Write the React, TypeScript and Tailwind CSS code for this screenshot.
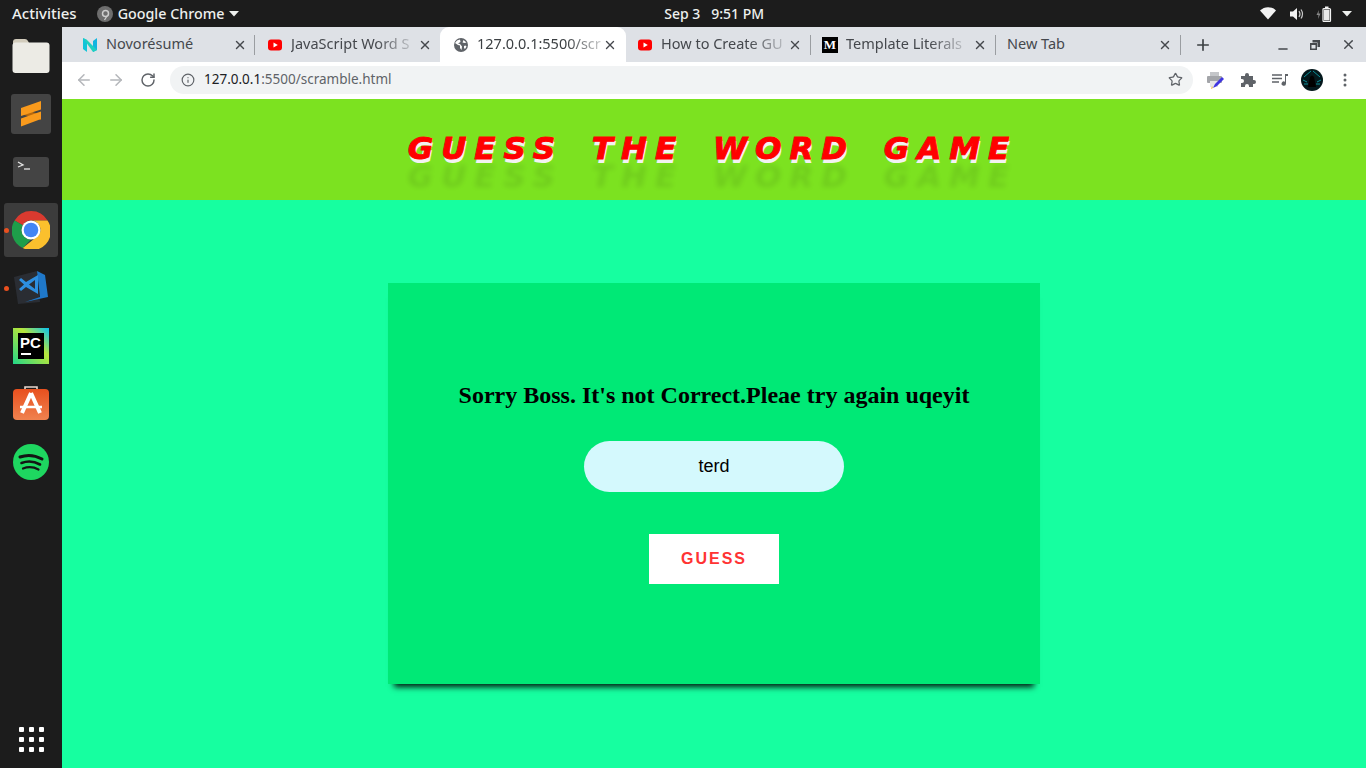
import React from 'react'
import { ArrowLeft, ArrowRight, RotateCw, Info, Star, Plus, X, Minus } from 'lucide-react'

function Youtube() {
  return (
    <svg width="16" height="16" viewBox="0 0 16 16" className="shrink-0">
      <rect x="1" y="2.5" width="14" height="11" rx="3" fill="#f00" />
      <path d="M6.5 5.5 L10.8 8 L6.5 10.5 Z" fill="#fff" />
    </svg>
  )
}

function Novo() {
  return (
    <svg width="16" height="16" viewBox="0 0 16 16" className="shrink-0">
      <path d="M1 1 L5 3 V15 L1 12 Z" fill="#12c4d8" />
      <path d="M15 1 L11 4 V15 L15 13 Z" fill="#12b5e0" />
      <path d="M1 1 L5 3 L15 13 L11 15 Z" fill="#1fd0c0" />
    </svg>
  )
}

function GlobeFav() {
  return (
    <svg width="16" height="16" viewBox="0 0 16 16" className="shrink-0">
      <circle cx="8" cy="8" r="7" fill="#5f6368" />
      <path d="M7 2.5 L4 3.5 L2 6 L5 8 L7 8.5 L7 11 L8.5 13 L9 9.5 L7 7 L5 6.5 L7.5 5 Z" fill="#fff" />
      <path d="M10.5 3 L9.5 5.5 L11.5 6 L13.5 5.5 Z M11 9 L12.5 8.5 L13.5 9.5 L12 12 L11 11 Z" fill="#fff" />
    </svg>
  )
}

function MediumFav() {
  return (
    <div className="w-4 h-4 shrink-0 bg-black text-white flex items-center justify-center font-['Liberation_Serif',serif] font-bold text-[13px] leading-none">
      M
    </div>
  )
}

function Tab({
  icon,
  title,
  active,
  divider,
  after,
  fade,
}: {
  icon?: React.ReactNode
  title: string
  active?: boolean
  divider?: boolean
  after?: boolean
  fade?: boolean
}) {
  return (
    <div
      className={
        active
          ? 'relative w-[186px] h-[35px] shrink-0 flex items-center pl-[13px] pr-[9px] bg-white rounded-t-[9px] text-[#3c4043]'
          : after
            ? 'relative w-[185px] h-[35px] shrink-0 flex items-center pl-[11px] pr-[9px] text-[#45484d]'
            : 'relative w-[185px] h-[35px] shrink-0 flex items-center pl-[12px] pr-[8px] text-[#45484d]'
      }
    >
      {icon}
      <div className={icon ? 'flex-1 ml-[8px] pb-[3px]' : 'flex-1 pb-[3px]'}>
        <span
          className={
            fade
              ? 'inline-block whitespace-nowrap text-[14.5px] [mask-image:linear-gradient(to_right,#000_72%,rgba(0,0,0,0.25)_100%)]'
              : 'inline-block whitespace-nowrap text-[14.5px]'
          }
        >
          {title}
        </span>
      </div>
      <X size={14} strokeWidth={2.4} className="shrink-0 text-[#45484d]" />
      {divider && <div className="absolute right-0 top-[8px] w-px h-[20px] bg-[#9a9da1]" />}
    </div>
  )
}

function TopBar() {
  return (
    <div className="h-[27px] shrink-0 bg-[#1c1c1c] text-[#eef0ee] flex items-center text-[14px] font-medium pl-[12px] pr-[14px]">
      <span className="text-[15px]">Activities</span>
      <svg width="16" height="16" viewBox="0 0 16 16" className="ml-[20px]">
        <circle cx="8" cy="8" r="8" fill="#6e6e6e" />
        <circle cx="8.5" cy="7.5" r="3" fill="none" stroke="#cfcfcf" strokeWidth="1.5" />
        <path d="M10 10 L7.5 14" stroke="#cfcfcf" strokeWidth="1.3" />
      </svg>
      <span className="ml-[5px] text-[14.3px]">Google Chrome</span>
      <svg width="10" height="6" viewBox="0 0 10 6" className="ml-[5px]">
        <path d="M0 0 H10 L5 5.5 Z" fill="#eef0ee" />
      </svg>
      <div className="flex-1 flex justify-center pr-[71px]">
        <span className="whitespace-pre">Sep 3   9:51 PM</span>
      </div>
      <svg width="16" height="13" viewBox="0 0 16 13" className="mr-[1px]">
        <path d="M0 3.5 C4.5 -1 11.5 -1 16 3.5 L8 12.5 Z" fill="#f2f2f2" />
      </svg>
      <svg width="16" height="14" viewBox="0 0 16 14" className="ml-[12px]">
        <path d="M1 4.5 H4 L8 1 V13 L4 9.5 H1 Z" fill="#f2f2f2" />
        <path d="M10 4 Q12 7 10 10 M12 2.5 Q15 7 12 11.5" fill="none" stroke="#c8c8c8" strokeWidth="1.2" />
      </svg>
      <svg width="16" height="16" viewBox="0 0 16 16" className="ml-[11px]">
        <path d="M3 4 L0.5 9 H2.5 L2 13 L4.5 7.5 H2.5 Z" fill="#8a8a8a" />
        <rect x="7" y="2.5" width="7.5" height="13" rx="1" fill="none" stroke="#f2f2f2" strokeWidth="1.2" />
        <rect x="9" y="0.5" width="3.5" height="2" fill="#f2f2f2" />
        <rect x="8" y="3.5" width="5.5" height="11" fill="#e8e8e8" />
      </svg>
      <svg width="10" height="6" viewBox="0 0 10 6" className="ml-[10px]">
        <path d="M0 0 H10 L5 5.5 Z" fill="#eef0ee" />
      </svg>
    </div>
  )
}

function DockItem({ children, active, dot }: { children: React.ReactNode; active?: boolean; dot?: boolean }) {
  return (
    <div className="relative h-[58px] w-[62px] flex items-center justify-center">
      {active && <div className="absolute left-[4px] top-[2px] w-[54px] h-[54px] rounded-[3px] bg-[#3c3c3c]" />}
      {dot && <div className="absolute left-[4px] top-[27px] w-[5px] h-[5px] rounded-full bg-[#e9501f]" />}
      <div className="relative">{children}</div>
    </div>
  )
}

function Dock() {
  return (
    <div className="w-[62px] shrink-0 bg-[#1c1c1c] flex flex-col items-center">
      <DockItem>
        <svg width="38" height="36" viewBox="0 0 38 36">
          <path d="M1 4 Q1 1 4 1 H13 Q15 1 16 3 L17 5 H34 Q37 5 37 8 V12 H1 Z" fill="#d2ccbc" />
          <rect x="0.5" y="4.5" width="37" height="30.5" rx="3" fill="#ecebe5" />
        </svg>
      </DockItem>
      <DockItem>
        <svg width="40" height="40" viewBox="0 0 40 40">
          <rect width="40" height="40" rx="3" fill="#444444" />
          <path d="M10 14 L30 21 V26 L10 20 Z" fill="#b9690c" />
          <path d="M30 7 V15.5 L10 22 V14 Z" fill="#f99a1c" />
          <path d="M30 17.5 V25 L10 32.5 V24.5 Z" fill="#f99a1c" />
        </svg>
      </DockItem>
      <DockItem>
        <svg width="36" height="30" viewBox="0 0 36 30">
          <rect width="36" height="30" rx="3" fill="#444444" />
          <path d="M5 5 L10 8 L5 10" fill="none" stroke="#e6e6e6" strokeWidth="1.3" />
          <path d="M11 12 H17" stroke="#e6e6e6" strokeWidth="1.3" />
        </svg>
      </DockItem>
      <DockItem active dot>
        <svg width="38" height="38" viewBox="0 0 38 38">
          <path d="M19 0 A19 19 0 0 1 35.5 9.5 L19 9.5 A9.5 9.5 0 0 0 10.8 14.3 L2.6 9.5 A19 19 0 0 1 19 0 Z" fill="#d93a2f" />
          <path d="M2.6 9.5 L10.8 14.3 A9.5 9.5 0 0 0 19 28.5 L10.8 37 A19 19 0 0 1 2.6 9.5 Z" fill="#1e9e4a" />
          <path d="M35.5 9.5 A19 19 0 0 1 10.8 37 L27.2 23.7 A9.5 9.5 0 0 0 19 9.5 Z" fill="#fbc02d" />
          <circle cx="19" cy="19" r="9.5" fill="#fff" />
          <circle cx="19" cy="19" r="7.3" fill="#4285f4" />
        </svg>
      </DockItem>
      <DockItem dot>
        <svg width="36" height="36" viewBox="0 0 36 36">
          <path d="M1 7 L24 1 L27 32 L5 34 Z" fill="#2a2d33" />
          <path d="M24 1 L32 5 L35 27 L12 32 L27 27 Z" fill="#1f78c9" />
          <path d="M25 5 V24 L13 17 L8 21 L6 19 L11 14.5 L6 10 L8 8 L13 12 Z" fill="#2d8fe0" />
          <path d="M22 10 L16 14.5 L22 19 Z" fill="#2a2d33" />
        </svg>
      </DockItem>
      <DockItem>
        <svg width="36" height="36" viewBox="0 0 36 36">
          <defs>
            <linearGradient id="pc" x1="0" y1="1" x2="1" y2="0">
              <stop offset="0" stopColor="#21d789" />
              <stop offset="0.6" stopColor="#b8e53a" />
              <stop offset="1" stopColor="#07c3f2" />
            </linearGradient>
          </defs>
          <rect width="36" height="36" fill="url(#pc)" />
          <rect x="5" y="5" width="26" height="26" fill="#000" />
          <text x="7" y="20" fontFamily="Liberation Sans, sans-serif" fontWeight="700" fontSize="15" fill="#fff">
            PC
          </text>
          <rect x="8" y="25" width="10" height="2" fill="#fff" />
        </svg>
      </DockItem>
      <DockItem>
        <svg width="36" height="36" viewBox="0 0 36 36">
          <defs>
            <linearGradient id="store" x1="0" y1="0" x2="0" y2="1">
              <stop offset="0" stopColor="#e8501e" />
              <stop offset="1" stopColor="#f0824f" />
            </linearGradient>
          </defs>
          <path d="M12 4 V1 H24 V4" fill="none" stroke="#e8d8cf" strokeWidth="1.6" />
          <rect y="3" width="36" height="31" rx="4" fill="url(#store)" />
          <path d="M18 7 L9 27 M18 7 L27 27" stroke="#fff" strokeWidth="4" />
          <path d="M7 21 H29" stroke="#fff" strokeWidth="2.5" />
        </svg>
      </DockItem>
      <DockItem>
        <svg width="36" height="36" viewBox="0 0 36 36">
          <circle cx="18" cy="18" r="18" fill="#1ed760" />
          <path d="M7 13 Q18 9 29 15" fill="none" stroke="#141414" strokeWidth="3" strokeLinecap="round" />
          <path d="M8.5 19 Q18 15.5 27 20.5" fill="none" stroke="#141414" strokeWidth="2.6" strokeLinecap="round" />
          <path d="M10 24.5 Q18 21.5 25.5 25.5" fill="none" stroke="#141414" strokeWidth="2.2" strokeLinecap="round" />
        </svg>
      </DockItem>
      <div className="flex-1" />
      <div className="grid grid-cols-3 gap-[5px] mb-[16px]">
        {[0, 1, 2, 3, 4, 5, 6, 7, 8].map((i) => (
          <div key={i} className="w-[5px] h-[5px] rounded-[1px] bg-white" />
        ))}
      </div>
    </div>
  )
}

function Browser() {
  return (
    <div className="shrink-0 font-['Noto_Sans',sans-serif]">
      <div className="h-[35px] bg-[#dee1e6] flex items-center pl-[8px]">
        <Tab icon={<Novo />} title="Novorésumé" divider />
        <Tab icon={<Youtube />} title="JavaScript Word S" fade />
        <Tab icon={<GlobeFav />} title="127.0.0.1:5500/scr" active fade />
        <Tab icon={<Youtube />} title="How to Create GU" divider after fade />
        <Tab icon={<MediumFav />} title="Template Literals" divider after fade />
        <Tab title="New Tab" divider after />
        <Plus size={18} strokeWidth={2.2} className="ml-[13px] text-[#3c4043]" />
        <div className="flex-1" />
        <Minus size={14} strokeWidth={2.4} className="mr-[19px] mt-[8px] text-[#45484d]" />
        <svg width="12" height="12" viewBox="0 0 12 12" className="mr-[20px]">
          <path d="M3.5 1 H11 V8 H8.5 V3.5 H3.5 Z M1 4 H8 V11 H1 Z M2.5 6 V9.5 H6.5 V6 Z" fill="#45484d" fillRule="evenodd" />
        </svg>
        <X size={15} strokeWidth={2.2} className="mr-[10px] text-[#45484d]" />
      </div>
      <div className="h-[37px] bg-white flex items-center pb-[2px]">
        <ArrowLeft size={18} strokeWidth={2} className="ml-[13px] text-[#b4b6ba]" />
        <ArrowRight size={18} strokeWidth={2} className="ml-[14px] text-[#b4b6ba]" />
        <RotateCw size={16} strokeWidth={2.2} className="ml-[15px] text-[#5f6368]" />
        <div className="ml-[14px] w-[1023px] h-[28px] rounded-full bg-[#f1f3f4] flex items-center pl-[11px] pr-[10px]">
          <Info size={14} strokeWidth={2} className="text-[#5f6368]" />
          <div className="ml-[9px] flex-1 text-[13.5px] text-[#5f6368]">
            <span className="text-[#202124]">127.0.0.1</span>:5500/scramble.html
          </div>
          <Star size={15} strokeWidth={2} className="text-[#5f6368]" />
        </div>
        <svg width="20" height="20" viewBox="0 0 20 20" className="ml-[12px]">
          <rect x="5" y="2" width="9" height="4" fill="#c4c6c9" />
          <rect x="2" y="6" width="15" height="7" rx="1" fill="#a3a5a9" />
          <rect x="5" y="11" width="8" height="6" fill="#e4e5e6" />
          <path d="M8 18 L10 14 L17 7 L19 9 L12 16 Z" fill="#3f35e0" />
          <path d="M6 19 L8 18 L7 16 Z" fill="#e3b341" />
        </svg>
        <svg width="16" height="16" viewBox="0 0 16 16" className="ml-[15px]">
          <path d="M1 4 H5 V3 A2 2 0 0 1 9 3 V4 H13 V8 H14 A2 2 0 0 1 14 12 H13 V15 H9 V14 A1.7 1.7 0 0 0 5 14 V15 H1 V11 H2 A2 2 0 0 0 2 7 H1 Z" fill="#5f6368" />
        </svg>
        <svg width="16" height="14" viewBox="0 0 16 14" className="ml-[16px]">
          <path d="M0 2 H10 M0 5.5 H10 M0 9 H7" stroke="#5f6368" strokeWidth="1.4" />
          <path d="M13 1 H16 V3 H14 V10.5 A2.2 2.2 0 1 1 13 8.7 Z" fill="#5f6368" />
        </svg>
        <svg width="22" height="22" viewBox="0 0 22 22" className="ml-[13px]">
          <circle cx="11" cy="11" r="11" fill="#04181c" />
          <path d="M3 8 L10 2 M19 8 L12 2 M3 15 H7 M15 15 H19 M2 11 L6 13 M20 11 L16 13" stroke="#0c8f98" strokeWidth="1" />
          <path d="M7 18 L9 8 Q11 5 13 8 L15 18 Z" fill="#000" />
        </svg>
        <svg width="4" height="14" viewBox="0 0 4 14" className="ml-[20px]">
          <circle cx="2" cy="2" r="1.5" fill="#5f6368" />
          <circle cx="2" cy="7" r="1.5" fill="#5f6368" />
          <circle cx="2" cy="12" r="1.5" fill="#5f6368" />
        </svg>
      </div>
    </div>
  )
}

export default function App() {
  return (
    <div className="h-screen w-full flex flex-col overflow-hidden font-['Noto_Sans',sans-serif]">
      <TopBar />
      <div className="flex-1 flex min-h-0">
        <Dock />
        <div className="flex-1 flex flex-col min-w-0">
          <Browser />
          <header className="h-[101px] shrink-0 bg-[#7ce220] flex items-center justify-center">
            <h1 className="font-['DejaVu_Sans',sans-serif] italic font-bold text-[31px] leading-none tracking-[8px] [word-spacing:10px] text-[#ff0000] pb-[3px] pr-[3px] [-webkit-text-stroke:1px_#ff0000] [text-shadow:1px_4px_0_#f2f2f2,0_28px_5px_rgba(0,0,0,0.09)]">
              GUESS THE WORD GAME
            </h1>
          </header>
          <main className="flex-1 bg-[#16ffa0] flex justify-center pt-[83px]">
            <div className="w-[652px] h-[401px] bg-[#00e976] flex flex-col items-center pt-[98px] shadow-[0_9px_6px_-6px_rgba(0,0,0,0.9)]">
              <h2 className="font-['Liberation_Serif',serif] font-bold text-[24px] leading-[28px] text-black">
                Sorry Boss. It's not Correct.Pleae try again uqeyit
              </h2>
              <input
                defaultValue="terd"
                className="mt-[32px] w-[260px] h-[51px] rounded-[26px] bg-[#d4f9fd] text-center text-[18px] text-black font-['Liberation_Sans',sans-serif] outline-none"
              />
              <button className="mt-[42px] w-[130px] h-[50px] bg-white text-[#ff3333] font-['Liberation_Sans',sans-serif] font-bold text-[16px] tracking-[2px]">
                GUESS
              </button>
            </div>
          </main>
        </div>
      </div>
    </div>
  )
}
